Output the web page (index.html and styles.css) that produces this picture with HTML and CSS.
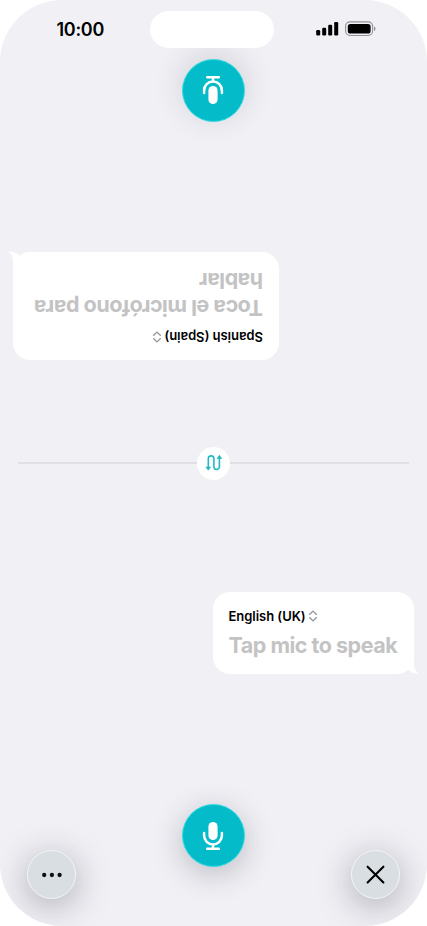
FILE: index.html
```html
<!DOCTYPE html>
<html lang="en">
<head>
<meta charset="utf-8">
<title>Conversation</title>
<link rel="stylesheet" href="styles.css">
</head>
<body>
<main class="phone">
  <header class="status">
    <time class="clock">10:00</time>
    <div class="island"></div>
    <svg class="indicators" width="62" height="18" viewBox="0 0 62 18">
      <rect x="1.2" y="10" width="4" height="5.5" rx="1.2"/>
      <rect x="7.2" y="7.7" width="4" height="7.8" rx="1.2"/>
      <rect x="13.2" y="4.8" width="4" height="10.7" rx="1.2"/>
      <rect x="19.2" y="2" width="4" height="13.5" rx="1.2"/>
      <rect class="shell" x="30.6" y="1.9" width="27" height="13.6" rx="4.4"/>
      <rect x="32.8" y="4" width="22.8" height="9.5" rx="2.6"/>
      <path class="nub" d="M59 6.5c2 .7 2 3.7 0 4.4z"/>
    </svg>
  </header>

  <section class="pane pane-far" lang="es">
    <article class="bubble">
      <div class="language"><span class="language-name es">Spanish (Spain)</span>
        <svg width="10" height="12" viewBox="0 0 10 12"><path d="M1.7 4.3 5 1.1l3.3 3.2M1.7 7.7 5 10.9l3.3-3.2"/></svg></div>
      <p class="prompt"><span>Toca el micrófono para</span><br><span>hablar</span></p>
      <svg class="tail" width="15" height="15" viewBox="0 0 15 15"><path d="M10 0V4C10 9 11.5 12.5 14.8 14.4 10.5 15 7 13.6 4.5 11L1 4z"/></svg>
    </article>
    <button class="mic" aria-label="Hablar">
      <svg width="24" height="32" viewBox="0 0 24 32"><rect x="7.4" y="1.9" width="9.2" height="18.2" rx="4.6"/><path d="M3.1 13v2.6a8.9 8.9 0 0 0 17.8 0V13M12 24.5v4M6.2 28.8h11.6"/></svg>
    </button>
  </section>

  <div class="divider">
    <button class="swap" aria-label="Switch layout">
      <svg width="18" height="18" viewBox="0 0 18 18"><path d="M3.3 14.2V4.7a2.8 2.8 0 0 1 5.6 0v8a2.75 2.75 0 0 0 5.5 0V3.3"/><path class="head" d="M.9 13h4.8l-2.4 3.3zM12 4.5h4.8l-2.4-3.3z"/></svg>
    </button>
  </div>

  <section class="pane pane-near">
    <article class="bubble">
      <div class="language"><span class="language-name en">English (UK)</span>
        <svg width="10" height="12" viewBox="0 0 10 12"><path d="M1.7 4.3 5 1.1l3.3 3.2M1.7 7.7 5 10.9l3.3-3.2"/></svg></div>
      <p class="prompt"><span>Tap mic to speak</span></p>
      <svg class="tail" width="15" height="15" viewBox="0 0 15 15"><path d="M10 0V4C10 9 11.5 12.5 14.8 14.4 10.5 15 7 13.6 4.5 11L1 4z"/></svg>
    </article>
    <nav class="controls">
      <button class="round" aria-label="More">
        <svg width="24" height="24" viewBox="0 0 24 24"><circle cx="4.2" cy="12" r="2.15"/><circle cx="11.9" cy="12" r="2.15"/><circle cx="19.6" cy="12" r="2.15"/></svg>
      </button>
      <button class="mic" aria-label="Speak">
        <svg width="24" height="32" viewBox="0 0 24 32"><rect x="7.4" y="1.9" width="9.2" height="18.2" rx="4.6"/><path d="M3.1 13v2.6a8.9 8.9 0 0 0 17.8 0V13M12 24.5v4M6.2 28.8h11.6"/></svg>
      </button>
      <button class="round" aria-label="Close">
        <svg width="24" height="24" viewBox="0 0 24 24"><path d="M3.6 3.7l15.8 15.8M19.4 3.7 3.6 19.5"/></svg>
      </button>
    </nav>
  </section>
</main>
</body>
</html>
```

FILE: styles.css
```css
* { box-sizing: border-box; }
body { margin: 0; background: #fff; font-family: Inter, "Liberation Sans", sans-serif; }
button { border: 0; padding: 0; display: grid; place-items: center; border-radius: 50%; }
svg { display: block; }

.phone {
  width: 427px;
  height: 926px;
  display: grid;
  grid-template-rows: 58px 388px 34px 446px;
  background: #f0f0f5;
  border-radius: 62px;
  overflow: hidden;
}

.status {
  position: relative;
  z-index: 1;
  display: grid;
  grid-template-columns: 150px 124px 1fr;
  align-items: start;
}
.clock { padding: 19px 0 0 56.5px; font-size: 18px; line-height: 22px; font-weight: 600; letter-spacing: -0.3px; }
.island { height: 37px; margin-top: 11px; border-radius: 19px; background: #fff; }
.indicators { margin: 20px 0 0 41px; }
.shell { fill: none; stroke: #929296; stroke-width: 1.1; }
.nub { fill: #929296; }

.pane { display: flex; flex-direction: column; align-items: center; }
.pane-far { transform: rotate(180deg); padding-top: 86px; padding-bottom: 1px; justify-content: space-between; }
.pane-near { padding-top: 111.5px; justify-content: space-between; }

.bubble {
  position: relative;
  align-self: flex-end;
  margin-right: 13px;
  border-radius: 17px;
  background: #fff;
}
.pane-far .bubble { width: 266px; height: 108px; padding: 14px 16px; }
.pane-near .bubble { width: 201px; height: 82px; padding: 15px 15.5px; }
.tail { position: absolute; right: -5px; bottom: -0.5px; fill: #fff; }
.language { display: flex; align-items: center; gap: 2.5px; height: 18px; }
.language svg { fill: none; stroke: #929296; stroke-width: 1.3; stroke-linecap: round; stroke-linejoin: round; }
.language-name { font-size: 13px; line-height: 18px; font-weight: 600; white-space: nowrap; letter-spacing: -0.04px; }
.prompt { margin: 7px 0 0; font-size: 21.5px; line-height: 26.5px; font-weight: 700; color: #c3c3c4; white-space: nowrap; letter-spacing: -0.5px; }

.mic {
  width: 63px;
  height: 63px;
  background: #04bbc9;
  border: 1px solid #35dce3;
  box-shadow: 0 7px 30px rgba(50, 45, 60, 0.27);
}
.pane-far .mic { box-shadow: 0 5px 30px rgba(50, 45, 60, 0.16); }
.mic svg { fill: #fff; margin-right: 1px; }
.pane-far .mic svg { margin: 0; }
.mic path { fill: none; stroke: #fff; stroke-width: 2.5; stroke-linecap: round; }

.divider { display: flex; align-items: center; justify-content: center; margin: 0 18px; }
.divider::before, .divider::after { content: ""; flex: 1; height: 2px; background: #dfdfe4; }
.swap { width: 33px; height: 33px; background: #fff; }
.swap path { fill: none; stroke: #23b9c3; stroke-width: 1.6; }
.swap .head { fill: #23b9c3; stroke-width: .6; stroke-linejoin: round; }

.controls {
  align-self: stretch;
  display: flex;
  justify-content: space-between;
  align-items: flex-end;
  padding: 0 27px 27px;
}
.controls .mic { margin-bottom: 32px; }
.round {
  width: 49px;
  height: 49px;
  background: #d9dee2;
  border: 1.5px solid #f3f4f7;
  box-shadow: 0 7px 34px rgba(50, 45, 60, 0.36);
}
.round path { fill: none; stroke: #000; stroke-width: 2.1; stroke-linecap: round; }
.round circle { fill: #0c1014; }
```
